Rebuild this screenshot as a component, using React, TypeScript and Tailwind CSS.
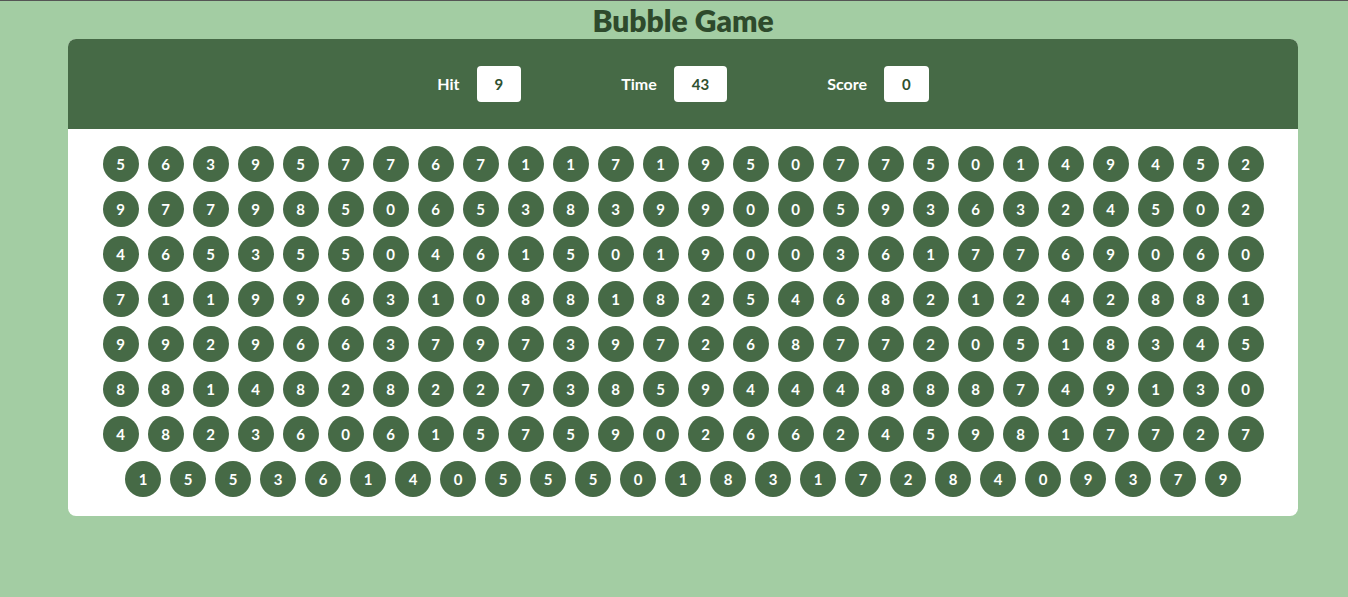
import React from 'react';

const rows = [
  '56395776711719507750149452',
  '97798506538399005936324502',
  '46535504615019003617769060',
  '71199631088182546821242881',
  '99296637973972687720518345',
  '88148282273859444888749130',
  '48236061575902662459817727',
  '1553614055501831728409379',
];

const bubbles = rows.join('').split('');

const Stat: React.FC<{ label: string; value: string }> = ({ label, value }) => (
  <div className="flex items-center gap-[17px]">
    <span className="text-white font-bold text-[16px]">{label}</span>
    <span className="bg-white text-[#2f5130] font-bold text-[15px] h-9 px-[18px] flex items-center rounded-[4px]">
      {value}
    </span>
  </div>
);

export default function App() {
  return (
    <div
      className="min-h-screen bg-[#a3cda3] border-t border-[#555]"
      style={{ fontFamily: 'Lato, "Open Sans", sans-serif' }}
    >
      <h1 className="ml-[68px] w-[1230px] text-center text-[30px] leading-[38px] font-extrabold text-[#2e4a2c]">
        Bubble Game
      </h1>
      <div className="ml-[68px] w-[1230px] rounded-lg overflow-hidden bg-white">
        <div className="h-[90px] bg-[#466a46] flex items-center justify-center gap-[100px]">
          <Stat label="Hit" value="9" />
          <Stat label="Time" value="43" />
          <Stat label="Score" value="0" />
        </div>
        <div className="flex flex-wrap justify-center gap-[9px] pt-[17px] pb-[19px] px-[34px]">
          {bubbles.map((n, i) => (
            <div
              key={i}
              className="w-9 h-9 rounded-full bg-[#466a46] text-white font-bold text-[15px] flex items-center justify-center"
            >
              {n}
            </div>
          ))}
        </div>
      </div>
    </div>
  );
}
